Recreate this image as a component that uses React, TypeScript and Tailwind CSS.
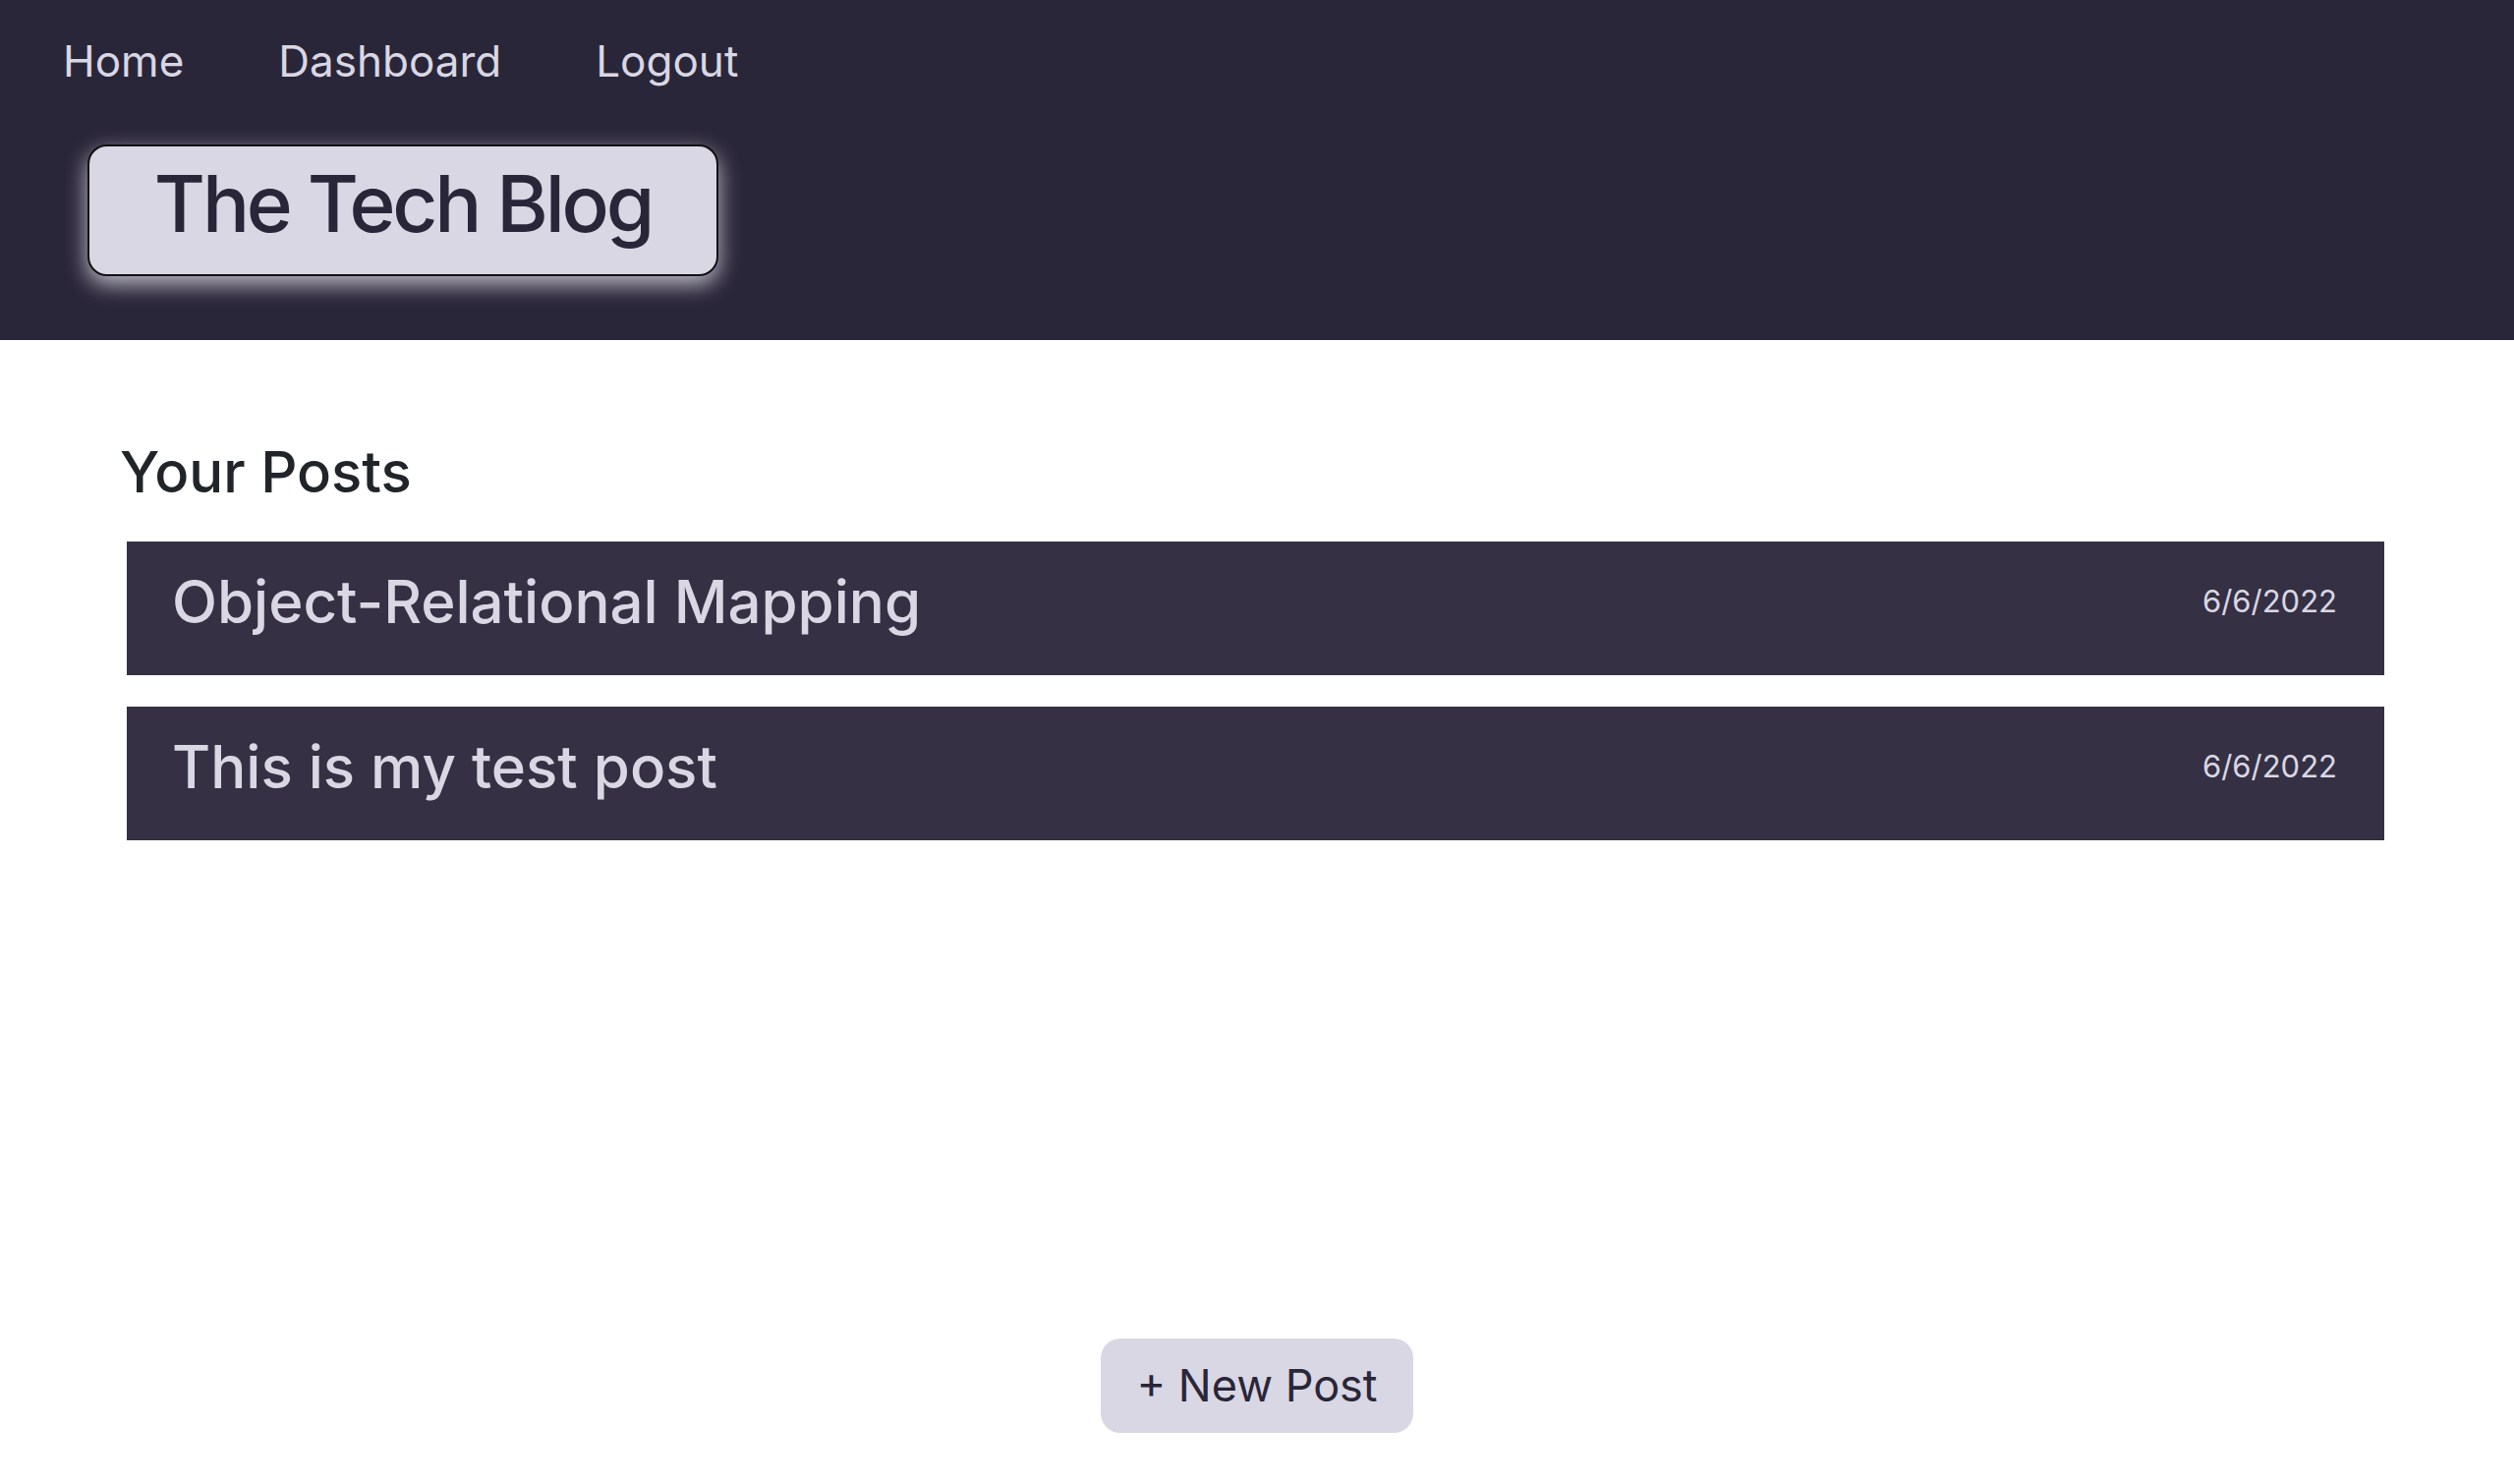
export default function App() {
  const posts = [
    { title: 'Object-Relational Mapping', date: '6/6/2022' },
    { title: 'This is my test post', date: '6/6/2022' },
  ];

  return (
    <div className="min-h-[1510px] bg-white font-['Inter',sans-serif] flex flex-col">
      {/* Header */}
      <header className="bg-[#2a2639] h-[346px] shrink-0">
        <nav className="flex gap-[96px] pl-[64px] pt-[36px]">
          {['Home', 'Dashboard', 'Logout'].map((item) => (
            <a key={item} href="#" className="text-[44px] leading-[53px] text-[#d9d7e3]">
              {item}
            </a>
          ))}
        </nav>
        <div className="ml-[89px] mt-[58px] w-[642px] h-[134px] bg-[#d9d7e3] border-2 border-[#111] rounded-[20px] shadow-[0_8px_22px_rgba(217,215,227,0.85)] text-center pt-[10px]">
          <h1 className="text-[80px] leading-[96px] font-medium tracking-[-0.04em] text-[#2a2639]">The Tech Blog</h1>
        </div>
      </header>

      {/* Posts */}
      <main className="flex-1 flex flex-col px-[122px] pt-[99px]">
        <h2 className="text-[58px] leading-[70px] font-medium text-[#212529]">Your Posts</h2>
        <div className="mt-[36px] ml-[7px] mr-[10px] flex flex-col gap-[32px]">
          {posts.map((post) => (
            <div key={post.title} className="bg-[#353044] h-[136px] flex items-start justify-between pl-[46px] pr-[48px] pt-[25px]">
              <span className="text-[60px] leading-[72px] font-medium text-[#d9d7e3]">{post.title}</span>
              <span className="text-[31px] leading-[39px] text-[#d9d7e3] mt-[16px]">{post.date}</span>
            </div>
          ))}
        </div>
        <div className="mt-auto mb-[52px] flex justify-center">
          <button className="w-[318px] h-[96px] bg-[#d9d7e3] rounded-[20px] text-[45px] text-[#2a2639]">
            + New Post
          </button>
        </div>
      </main>
    </div>
  );
}
